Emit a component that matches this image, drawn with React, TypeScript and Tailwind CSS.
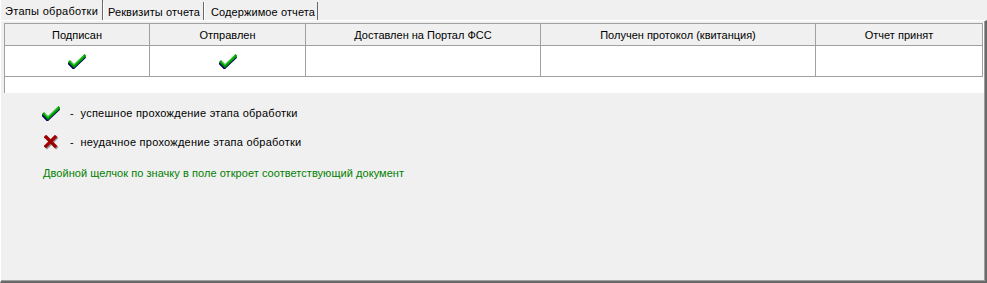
import React from 'react';

const CheckIcon = () => (
  <svg width="18" height="15" viewBox="0 0 18 15">
    {/* shadow */}
    <polyline points="2,8.5 6,12.5 16.5,2.5" fill="none" stroke="#000060" strokeWidth="3.2" strokeLinecap="square" transform="translate(-0.6,1)" />
    <polyline points="2,8 6,12 16.5,2" fill="none" stroke="#00a000" strokeWidth="2.8" strokeLinecap="square" />
    <polyline points="2.5,7.5 6,11 16,1.5" fill="none" stroke="#40d040" strokeWidth="1" />
  </svg>
);

const CrossIcon = () => (
  <svg width="15" height="15" viewBox="0 0 15 15">
    <g transform="translate(1,1)" stroke="#909090" strokeWidth="3.4" strokeLinecap="square">
      <line x1="2" y1="2" x2="11" y2="11" />
      <line x1="11" y1="2" x2="2" y2="11" />
    </g>
    <g stroke="#a00000" strokeWidth="3.2" strokeLinecap="square">
      <line x1="2" y1="2" x2="11" y2="11" />
      <line x1="11" y1="2" x2="2" y2="11" />
    </g>
  </svg>
);

const columns = [
  { title: 'Подписан', width: 'w-[145px]', done: true },
  { title: 'Отправлен', width: 'w-[156px]', done: true },
  { title: 'Доставлен на Портал ФСС', width: 'w-[235px]', done: false },
  { title: 'Получен протокол (квитанция)', width: 'w-[275px]', done: false },
  { title: 'Отчет принят', width: 'w-[167px]', done: false },
];

export default function App() {
  return (
    <div
      className="w-[987px] h-[283px] bg-[#f0f0f0] text-[11px] text-black overflow-hidden flex flex-col"
      style={{ fontFamily: '"Liberation Sans", Arial, sans-serif' }}
    >
      {/* Tabs */}
      <div className="h-[20px] flex items-end whitespace-nowrap">
        <div className="shrink-0 h-[20px] w-[103px] pl-[4px] pt-[2px] border-l border-white border-r border-r-[#696969] flex items-center tracking-[0.3px]">
          Этапы обработки
        </div>
        <div className="shrink-0 h-[18px] w-[101px] pl-[4px] pt-[3px] border-l border-white border-r border-r-[#696969] flex items-center tracking-[0.1px]">
          Реквизиты отчета
        </div>
        <div className="shrink-0 h-[18px] w-[114px] pl-[6px] pt-[3px] border-l border-white border-r border-r-[#696969] flex items-center tracking-[0.1px]">
          Содержимое отчета
        </div>
      </div>

      {/* Panel */}
      <div className="flex-1 border-t border-l border-white border-r-2 border-b-2 border-r-[#696969] border-b-[#696969]">
        <div className="h-full pl-[3px] pt-[2px] border-r border-b border-[#a0a0a0]">
          {/* Grid */}
          <div className="w-[980px] h-[70px] bg-white border-l border-[#a0a0a0]">
            <div className="flex h-[23px] border-t border-b border-[#a0a0a0] bg-[#f0f0f0] w-[978px]">
              {columns.map((c) => (
                <div key={c.title} className={`${c.width} h-full border-r border-[#a0a0a0] flex items-center justify-center pt-[2px]`}>
                  {c.title}
                </div>
              ))}
            </div>
            <div className="flex h-[31px] border-b border-[#a0a0a0] w-[978px]">
              {columns.map((c) => (
                <div key={c.title} className={`${c.width} h-full border-r border-[#a0a0a0] flex items-center justify-center pt-[1px]`}>
                  {c.done && <CheckIcon />}
                </div>
              ))}
            </div>
          </div>

          {/* Legend */}
          <div className="pl-[38px] pt-[12px] flex flex-col">
            <div className="flex items-center h-[16px]">
              <div className="w-[28px] flex justify-start">
                <CheckIcon />
              </div>
              <span className="tracking-[0.25px]">-&nbsp;&nbsp;успешное прохождение этапа обработки</span>
            </div>
            <div className="flex items-center h-[16px] mt-[13px]">
              <div className="w-[28px] flex justify-start pl-[2px]">
                <CrossIcon />
              </div>
              <span className="tracking-[0.25px]">-&nbsp;&nbsp;неудачное прохождение этапа обработки</span>
            </div>
            <div className="mt-[15px] pl-[1px] text-[#008000] h-[16px] flex items-center tracking-[0.05px]">
              Двойной щелчок по значку в поле откроет соответствующий документ
            </div>
          </div>
        </div>
      </div>
    </div>
  );
}
